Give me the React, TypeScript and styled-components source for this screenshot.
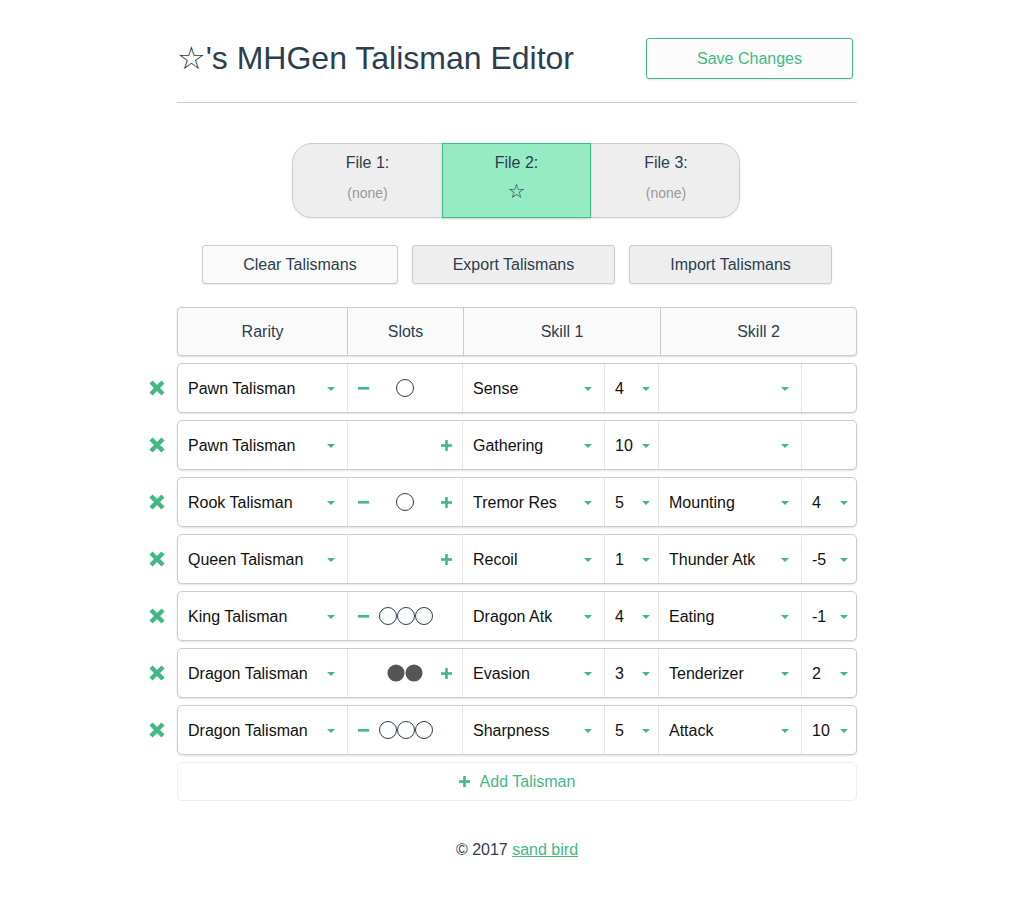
import React from 'react';
import styled, { createGlobalStyle } from 'styled-components';

const green = '#42b983';
const navy = '#2c3e50';

const GlobalStyle = createGlobalStyle`
  body {
    margin: 0;
    background: #fff;
    font-family: "Liberation Sans", Arial, "DejaVu Sans", sans-serif;
    color: ${navy};
  }
`;

const Page = styled.div`
  width: 680px;
  margin: 0 auto;
  padding: 38px 0 40px 25px;
`;

const TopBar = styled.header`
  display: flex;
  justify-content: space-between;
  align-items: center;
  padding-right: 4px;
`;

const Title = styled.h1`
  margin: 0;
  font-size: 32px;
  font-weight: normal;
  color: ${navy};
  line-height: 41px;
`;

const SaveButton = styled.button`
  width: 207px;
  height: 41px;
  border: 1px solid ${green};
  border-radius: 3px;
  background: #fcfcfc;
  color: ${green};
  font-family: inherit;
  font-size: 16px;
  box-shadow: 0 1px 2px rgba(0, 0, 0, 0.1);
`;

const Rule = styled.hr`
  margin: 23px 0 0;
  border: 0;
  border-top: 1px solid #ccc;
`;

const Tabs = styled.div`
  display: grid;
  grid-template-columns: 149px 149px 150px;
  width: 448px;
  height: 75px;
  margin: 40px auto 0;
  border: 1px solid #ccc;
  border-radius: 20px;
  background: #eee;
  box-sizing: border-box;
  box-shadow: 0 1px 2px rgba(0, 0, 0, 0.08);
  transform: translateX(-1px);
`;

const Tab = styled.div<{ $active?: boolean }>`
  display: flex;
  flex-direction: column;
  align-items: center;
  padding-top: 9px;
  margin: ${p => (p.$active ? '-1px 0' : '0')};
  background: ${p => (p.$active ? '#95ebc4' : 'transparent')};
  border: ${p => (p.$active ? `1px solid ${green}` : '0')};
  box-shadow: ${p => (p.$active ? '0 1px 2px rgba(0, 0, 0, 0.15)' : 'none')};
`;

const TabLabel = styled.div`
  font-size: 16px;
  line-height: 20px;
  color: ${navy};
`;

const TabSub = styled.div<{ $star?: boolean }>`
  margin-top: ${p => (p.$star ? '8px' : '10px')};
  font-size: ${p => (p.$star ? '20px' : '14px')};
  line-height: 20px;
  color: ${p => (p.$star ? navy : '#999')};
  font-family: ${p => (p.$star ? '"DejaVu Sans", sans-serif' : 'inherit')};
`;

const Actions = styled.div`
  display: flex;
  justify-content: center;
  gap: 14px;
  margin-top: 27px;
`;

const ActionButton = styled.button<{ $light?: boolean }>`
  height: 39px;
  padding: 0 40px;
  border: 1px solid #ccc;
  border-radius: 3px;
  background: ${p => (p.$light ? '#fafafa' : '#eee')};
  color: ${navy};
  font-family: inherit;
  font-size: 16px;
  box-shadow: 0 1px 2px rgba(0, 0, 0, 0.08);
`;

const HeadRow = styled.div`
  display: grid;
  grid-template-columns: 170px 116px 197px 1fr;
  height: 49px;
  margin-top: 23px;
  border: 1px solid #ccc;
  border-radius: 4px;
  background: #fafafa;
  box-sizing: border-box;
  box-shadow: 0 1px 2px rgba(0, 0, 0, 0.15);
`;

const HeadCell = styled.div`
  display: flex;
  align-items: center;
  justify-content: center;
  padding-top: 1px;
  font-size: 16px;
  color: ${navy};
  border-right: 1px solid #ccc;
  &:last-child {
    border-right: 0;
  }
`;

const Line = styled.div`
  display: flex;
  margin: 7px 0 0 -40px;
`;

const DeleteButton = styled.div`
  width: 40px;
  display: flex;
  align-items: center;
  justify-content: center;
`;

const Row = styled.div`
  flex: 1;
  display: grid;
  grid-template-columns: 170px 115px 142px 54px 143px 1fr;
  height: 50px;
  border: 1px solid #ccc;
  border-radius: 5px;
  background: #fff;
  box-sizing: border-box;
  box-shadow: 0 1px 2px rgba(0, 0, 0, 0.12);
`;

const Cell = styled.div<{ $tight?: boolean }>`
  display: flex;
  align-items: center;
  justify-content: space-between;
  padding: 1px ${p => (p.$tight ? '8px' : '12px')} 0 10px;
  border-right: 1px solid #e5e5e5;
  font-size: 16px;
  color: #111;
  &:last-child {
    border-right: 0;
  }
`;

const Arrow = styled.span`
  width: 0;
  height: 0;
  border-left: 4px solid transparent;
  border-right: 4px solid transparent;
  border-top: 4px solid ${green};
`;

const SlotCell = styled.div`
  display: grid;
  grid-template-columns: 21px 1fr 21px;
  align-items: center;
  padding: 0 10px;
  border-right: 1px solid #e5e5e5;
`;

const SlotControl = styled.span<{ $end?: boolean }>`
  display: flex;
  justify-content: ${p => (p.$end ? 'flex-end' : 'flex-start')};
`;

const Circles = styled.div`
  display: flex;
  justify-content: center;
`;

const Circle = styled.span<{ $filled?: boolean }>`
  width: 18px;
  height: 18px;
  border-radius: 50%;
  box-sizing: border-box;
  border: ${p => (p.$filled ? '0' : `1.5px solid ${navy}`)};
  background: ${p => (p.$filled ? '#555' : 'transparent')};
  transform: ${p => (p.$filled ? 'scale(0.95)' : 'none')};
`;

const AddRow = styled.div`
  display: flex;
  align-items: center;
  justify-content: center;
  gap: 10px;
  height: 39px;
  margin-top: 7px;
  border: 1px solid #eee;
  border-radius: 5px;
  color: ${green};
  font-size: 16px;
  box-sizing: border-box;
`;

const Footer = styled.footer`
  margin-top: 40px;
  text-align: center;
  font-size: 16px;
  color: ${navy};
  a {
    color: ${green};
  }
`;

const Cross = () => (
  <svg width="16" height="16" viewBox="0 0 16 16">
    <path d="M2 2 L14 14 M14 2 L2 14" stroke={green} strokeWidth="4.4" />
  </svg>
);

const Minus = () => (
  <svg width="11" height="11" viewBox="0 0 11 11">
    <rect x="0" y="4" width="11" height="2.6" fill={green} />
  </svg>
);

const Plus = ({ size = 11 }: { size?: number }) => (
  <svg width={size} height={size} viewBox="0 0 11 11">
    <rect x="0" y="4.2" width="11" height="2.6" fill={green} />
    <rect x="4.2" y="0" width="2.6" height="11" fill={green} />
  </svg>
);

interface Talisman {
  rarity: string;
  slots: number;
  min: boolean;
  max: boolean;
  filled?: boolean;
  skill1: string;
  lv1: string;
  skill2: string;
  lv2: string;
}

const talismans: Talisman[] = [
  { rarity: 'Pawn Talisman', slots: 1, min: true, max: false, skill1: 'Sense', lv1: '4', skill2: '', lv2: '' },
  { rarity: 'Pawn Talisman', slots: 0, min: false, max: true, skill1: 'Gathering', lv1: '10', skill2: '', lv2: '' },
  { rarity: 'Rook Talisman', slots: 1, min: true, max: true, skill1: 'Tremor Res', lv1: '5', skill2: 'Mounting', lv2: '4' },
  { rarity: 'Queen Talisman', slots: 0, min: false, max: true, skill1: 'Recoil', lv1: '1', skill2: 'Thunder Atk', lv2: '-5' },
  { rarity: 'King Talisman', slots: 3, min: true, max: false, skill1: 'Dragon Atk', lv1: '4', skill2: 'Eating', lv2: '-1' },
  { rarity: 'Dragon Talisman', slots: 2, min: false, max: true, filled: true, skill1: 'Evasion', lv1: '3', skill2: 'Tenderizer', lv2: '2' },
  { rarity: 'Dragon Talisman', slots: 3, min: true, max: false, skill1: 'Sharpness', lv1: '5', skill2: 'Attack', lv2: '10' },
];

const Select: React.FC<{ value: string; tight?: boolean }> = ({ value, tight }) => (
  <Cell $tight={tight}>
    <span>{value}</span>
    <Arrow />
  </Cell>
);

const App: React.FC = () => (
  <Page>
    <GlobalStyle />
    <TopBar>
      <Title>☆'s MHGen Talisman Editor</Title>
      <SaveButton>Save Changes</SaveButton>
    </TopBar>
    <Rule />

    <Tabs>
      <Tab>
        <TabLabel>File 1:</TabLabel>
        <TabSub>(none)</TabSub>
      </Tab>
      <Tab $active>
        <TabLabel>File 2:</TabLabel>
        <TabSub $star>☆</TabSub>
      </Tab>
      <Tab>
        <TabLabel>File 3:</TabLabel>
        <TabSub>(none)</TabSub>
      </Tab>
    </Tabs>

    <Actions>
      <ActionButton $light>Clear Talismans</ActionButton>
      <ActionButton>Export Talismans</ActionButton>
      <ActionButton>Import Talismans</ActionButton>
    </Actions>

    <HeadRow>
      <HeadCell>Rarity</HeadCell>
      <HeadCell>Slots</HeadCell>
      <HeadCell>Skill 1</HeadCell>
      <HeadCell>Skill 2</HeadCell>
    </HeadRow>

    {talismans.map((t, i) => (
      <Line key={i}>
        <DeleteButton>
          <Cross />
        </DeleteButton>
        <Row>
          <Select value={t.rarity} />
          <SlotCell>
            <SlotControl>{t.min && <Minus />}</SlotControl>
            <Circles>
              {Array.from({ length: t.slots }).map((_, j) => (
                <Circle key={j} $filled={t.filled} />
              ))}
            </Circles>
            <SlotControl $end>{t.max && <Plus />}</SlotControl>
          </SlotCell>
          <Select value={t.skill1} />
          <Select value={t.lv1} tight />
          <Select value={t.skill2} />
          {t.skill2 ? <Select value={t.lv2} tight /> : <Cell />}
        </Row>
      </Line>
    ))}

    <AddRow>
      <Plus />
      <span>Add Talisman</span>
    </AddRow>

    <Footer>
      © 2017 <a href="#">sand bird</a>
    </Footer>
  </Page>
);

export default App;
